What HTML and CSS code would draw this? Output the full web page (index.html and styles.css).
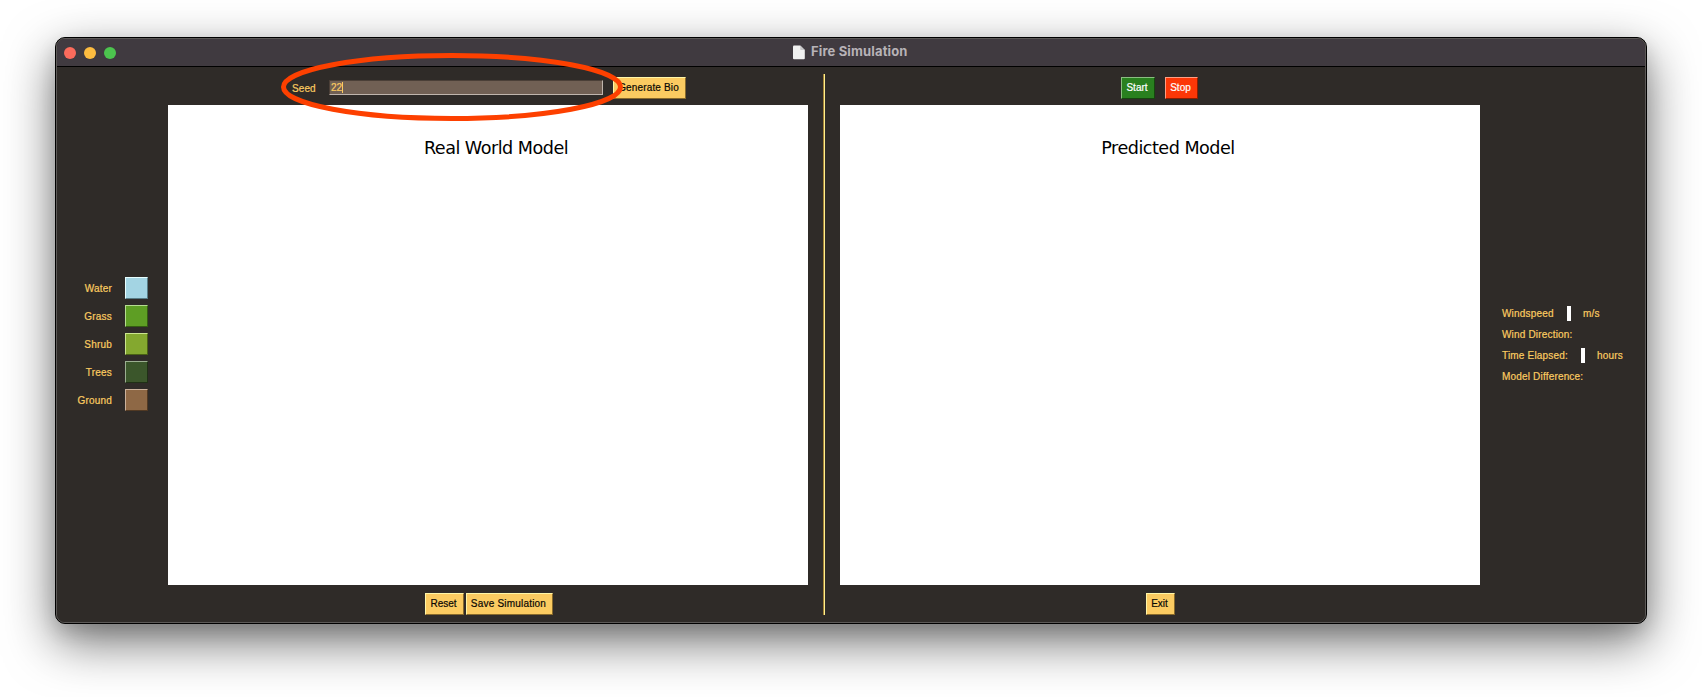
FILE: index.html
```html
<!DOCTYPE html>
<html lang="en">
<head>
<meta charset="utf-8">
<title>Fire Simulation</title>
<link rel="stylesheet" href="styles.css">
</head>
<body>
<div class="window">
  <div class="frame">
    <header class="titlebar">
      <div class="lights"><i class="light red"></i><i class="light amber"></i><i class="light green"></i></div>
      <div class="title">
        <svg width="12" height="15" viewBox="0 0 12 15"><path d="M1 0.5H7.2L11.8 5V13.2Q11.8 14.2 10.8 14.2H1Q0 14.2 0 13.2V1.5Q0 .5 1 .5Z" fill="#f1f1f1"/><path d="M7.2 .5V4.2Q7.2 5 8 5H11.8Z" fill="#c9c8ca"/></svg>
        <span>Fire Simulation</span>
      </div>
    </header>
    <main class="content">
      <aside class="legend">
        <div class="key"><span>Water</span><i class="swatch water"></i></div>
        <div class="key"><span>Grass</span><i class="swatch grass"></i></div>
        <div class="key"><span>Shrub</span><i class="swatch shrub"></i></div>
        <div class="key"><span>Trees</span><i class="swatch trees"></i></div>
        <div class="key"><span>Ground</span><i class="swatch ground"></i></div>
      </aside>
      <section class="panel">
        <div class="toolbar seedbar">
          <span class="seed-label">Seed</span>
          <div class="entry"><span>22</span><i class="caret"></i></div>
          <button class="btn generate">Generate Bio</button>
        </div>
        <div class="canvas"><h2>Real World Model</h2></div>
        <div class="footer left-footer"><button class="btn reset">Reset</button><button class="btn save">Save Simulation</button></div>
      </section>
      <div class="divider"></div>
      <section class="panel">
        <div class="toolbar runbar"><button class="btn start">Start</button><button class="btn stop">Stop</button></div>
        <div class="canvas"><h2>Predicted Model</h2></div>
        <div class="footer right-footer"><button class="btn exit">Exit</button></div>
      </section>
      <aside class="stats">
        <div class="stat"><span class="wind">Windspeed</span><i class="value"></i><span>m/s</span></div>
        <div class="stat"><span>Wind Direction:</span></div>
        <div class="stat"><span class="time">Time Elapsed:</span><i class="value"></i><span>hours</span></div>
        <div class="stat"><span>Model Difference:</span></div>
      </aside>
    </main>
  </div>
</div>
<svg class="highlight" width="344" height="70" viewBox="0 0 344 70"><ellipse cx="172" cy="35" rx="168.5" ry="31.5" fill="none" stroke="#fd4000" stroke-width="5"/></svg>
</body>
</html>
```
FILE: styles.css
```css
* { box-sizing: border-box; }
body {
  margin: 0;
  width: 1702px;
  height: 697px;
  padding: 37px 55px;
  background: #fff;
  overflow: hidden;
  font-family: "Liberation Sans", Arial, sans-serif;
  font-size: 10px;
}
.window {
  width: 1592px;
  height: 587px;
  border: 1px solid #000;
  border-radius: 10px;
  background: #2f2b28;
  box-shadow: 0 18px 50px rgba(0,0,0,.56), 0 8px 18px rgba(0,0,0,.12);
}
.frame {
  height: 585px;
  border: 1px solid #5c5957;
  border-radius: 9px;
  overflow: hidden;
}
.titlebar {
  display: grid;
  grid-template-columns: 736px 1fr;
  align-items: center;
  height: 28px;
  border-bottom: 1px solid #000;
  background: #403a40;
}
.lights { display: flex; gap: 8px; padding-left: 7px; }
.light { width: 12px; height: 12px; border-radius: 50%; }
.red { background: #fb6b5c; }
.amber { background: #fdbc40; }
.green { background: #4cc44e; }
.title {
  display: flex;
  align-items: center;
  gap: 6px;
  padding-bottom: 1px;
  color: #b7b2b7;
  font: bold 13px/16px Inter, sans-serif;
  letter-spacing: .15px;
}
.title span { padding-bottom: 2px; }
.title svg { margin-top: 1px; }
.content {
  display: grid;
  grid-template-columns: 111px 640px 32px 640px 165px;
  height: 555px;
  background: #2f2b28;
  color: #fbcb61;
  -webkit-text-stroke: .2px;
}
.legend {
  display: flex;
  flex-direction: column;
  gap: 6px;
  padding: 210px 20px 0 0;
}
.key { display: flex; justify-content: flex-end; gap: 13px; height: 22px; letter-spacing: .2px; }
.key span { line-height: 24px; }
.swatch { width: 23px; height: 22px; border: 1px solid; }
.water { background: #a3d4e3; border-color: #e8ffff #587c86 #587c86 #e8ffff; }
.grass { background: #5e9e24; border-color: #b6dc91 #345c12 #345c12 #b6dc91; }
.shrub { background: #84a82f; border-color: #cbe58f #4a6115 #4a6115 #cbe58f; }
.trees { background: #3b562b; border-color: #9bae91 #1f3016 #1f3016 #9bae91; }
.ground { background: #8e6845; border-color: #cbb29c #513923 #513923 #cbb29c; }
.panel { display: grid; grid-template-rows: 38px 480px 37px; }
.toolbar { display: flex; align-items: flex-start; padding-top: 10px; }
.seedbar { padding-left: 124px; }
.seed-label { width: 37px; line-height: 23px; letter-spacing: .1px; }
.entry {
  display: flex;
  align-items: center;
  width: 274px;
  height: 15px;
  margin: 3px 10px 0 0;
  padding-left: 1px;
  background: #716054;
  border: 1px solid;
  border-color: #4b3f37 #c0b5ad #c0b5ad #4b3f37;
}
.caret { width: 1px; height: 11px; background: #fbcb61; }
.btn {
  height: 22px;
  padding: 0 2px 0 0;
  border: 1px solid;
  border-color: #fff6a8 #87692b #87692b #fff6a8;
  border-radius: 0;
  background: #fbcb61;
  color: #0a0804;
  font: 10px/20px "Liberation Sans", Arial, sans-serif;
  white-space: nowrap;
  -webkit-text-stroke: .2px;
}
.generate { width: 73px; letter-spacing: .15px; }
.runbar { padding-left: 281px; gap: 10px; }
.start { width: 34px; background: #29801f; border-color: #8abe80 #16460f #16460f #8abe80; color: #fff; }
.stop { width: 33px; background: #fc3707; border-color: #ff9e83 #8c1d00 #8c1d00 #ff9e83; color: #fff; }
.canvas { background: #fff; }
.canvas h2 {
  margin: 0;
  padding: 33px 0 0 16px;
  color: #000;
  text-align: center;
  font: 400 17.6px/20px "DejaVu Sans", sans-serif;
  letter-spacing: -.51px;
  -webkit-text-stroke: 0;
}
.footer { display: flex; padding-top: 8px; gap: 2px; }
.left-footer { padding-left: 257px; }
.right-footer { padding-left: 306px; }
.reset { width: 39px; }
.save { width: 87px; letter-spacing: .2px; }
.exit { width: 29px; }
.divider {
  width: 2px;
  height: 541px;
  margin: 7px 0 0 15px;
  background: linear-gradient(90deg, #a18038 50%, #fff08c 50%);
}
.stats { padding: 236px 0 0 22px; letter-spacing: .18px; }
.stat { display: flex; align-items: center; height: 21px; }
.value { width: 4px; height: 15px; margin-right: 12px; background: #fff; }
.wind { width: 65px; }
.time { width: 79px; }
.highlight { position: absolute; left: 280px; top: 52px; }
```
